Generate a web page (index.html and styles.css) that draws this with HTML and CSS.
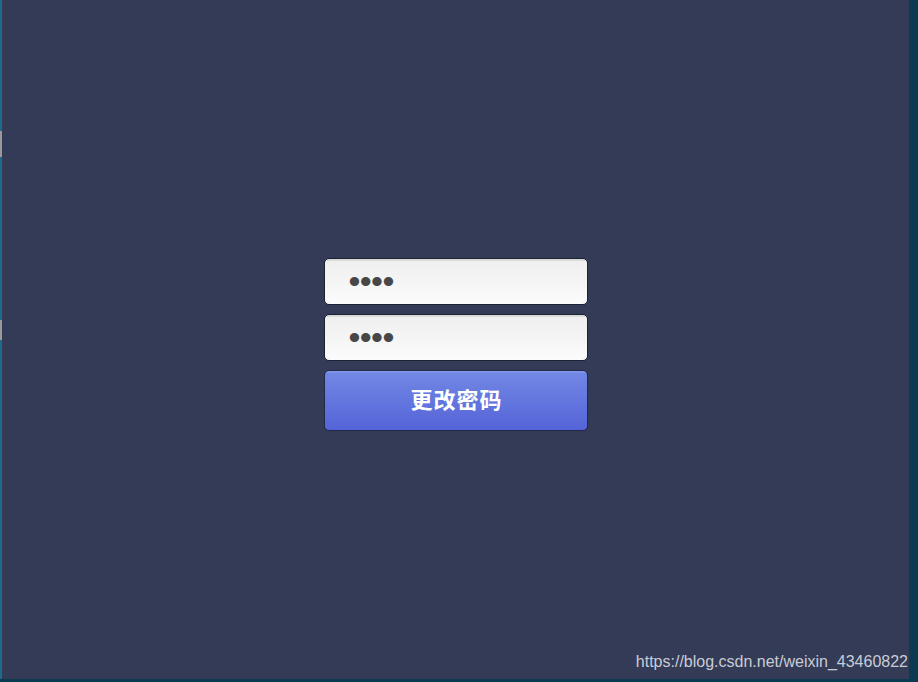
FILE: index.html
```html
<!DOCTYPE html>
<html lang="zh">
<head>
<meta charset="utf-8">
<title>更改密码</title>
<link rel="stylesheet" href="styles.css">
</head>
<body>
<div class="screen">
  <div class="main">
    <div class="edge">
      <div class="edge-seg edge-seg--a"></div>
      <div class="edge-mark edge-mark--a"></div>
      <div class="edge-seg edge-seg--b"></div>
      <div class="edge-mark edge-mark--b"></div>
      <div class="edge-seg edge-seg--c"></div>
    </div>
    <div class="content">
      <form class="form">
        <input class="field" type="password" value="1234">
        <input class="field" type="password" value="1234">
        <button class="submit" type="button">更改密码</button>
      </form>
      <div class="watermark">https://blog.csdn.net/weixin_43460822</div>
    </div>
  </div>
  <div class="side"></div>
  <div class="bottom"></div>
  <div class="corner"></div>
</div>
</body>
</html>
```
FILE: styles.css
```css
html, body {
  margin: 0;
  padding: 0;
  width: 918px;
  height: 682px;
  overflow: hidden;
  background: #0b3a51;
}
.screen {
  display: grid;
  grid-template-columns: 909px 9px;
  grid-template-rows: 679px 3px;
  width: 918px;
  height: 682px;
}
.main {
  display: flex;
  background: #333b56;
}
.edge {
  width: 2px;
  display: flex;
  flex-direction: column;
}
.edge-seg { background: #1f6a8c; }
.edge-seg--a { height: 131px; }
.edge-seg--b { height: 163px; }
.edge-seg--c { flex: 1; }
.edge-mark { background: #9a9a9a; }
.edge-mark--a { height: 26px; }
.edge-mark--b { height: 20px; }
.content {
  flex: 1;
  display: flex;
  flex-direction: column;
  align-items: center;
  padding-top: 258px;
  position: relative;
}
.form {
  display: flex;
  flex-direction: column;
  gap: 9px;
  width: 264px;
}
.field {
  box-sizing: border-box;
  width: 264px;
  height: 47px;
  margin: 0;
  border: 1px solid #1c2133;
  border-radius: 5px;
  padding: 0 0 0 24px;
  background: linear-gradient(#dadada 0, #dadada 2px, #efefef 2px, #fbfbfb 100%);
  font-family: "Liberation Sans", Arial, sans-serif;
  font-size: 34px;
  letter-spacing: -0.6px;
  color: #474747;
  outline: none;
}
.submit {
  box-sizing: border-box;
  width: 264px;
  height: 61px;
  margin: 0;
  border: 1px solid #22284a;
  border-radius: 5px;
  background: linear-gradient(#8497ea 0, #8497ea 1px, #7187e4 2px, #5564d8 100%);
  color: #ffffff;
  font-family: "Noto Sans CJK SC", "Noto Sans", sans-serif;
  font-size: 22px;
  font-weight: 700;
  letter-spacing: 1px;
  padding: 0 0 6px 2px;
  cursor: pointer;
}
.watermark {
  position: absolute;
  right: 1px;
  bottom: 8px;
  font-family: "Liberation Sans", Arial, sans-serif;
  font-size: 16px;
  color: #c9ccd6;
  white-space: nowrap;
}
.side { background: #0b3a51; }
.bottom { background: #0b3a51; }
.corner { background: #0b3a51; }
```
